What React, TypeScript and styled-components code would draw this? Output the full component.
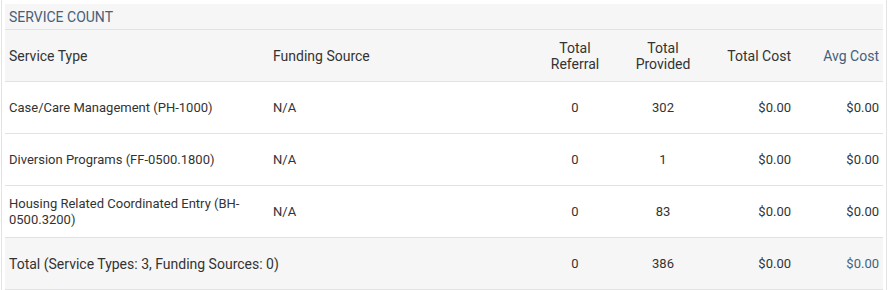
import React from 'react'
import styled, { createGlobalStyle } from 'styled-components'

const GlobalStyle = createGlobalStyle`
  html, body {
    margin: 0;
    padding: 0;
    background: #fff;
  }
  body {
    font-family: Roboto, 'Liberation Sans', Arial, sans-serif;
    color: #333;
  }
`

const Frame = styled.div`
  margin: 0 1px;
  padding: 4px 3px 0 3px;
  border-left: 1px solid #e3e3e3;
  border-right: 1px solid #e3e3e3;
  width: 878px;
`

const Title = styled.div`
  height: 25px;
  display: flex;
  align-items: center;
  padding: 0 4px;
  background: #f6f6f6;
  border-bottom: 1px solid #e2e2e2;
  font-size: 14px;
  color: #45607b;
  text-transform: uppercase;
`

const Row = styled.div<{ $shaded?: boolean }>`
  display: grid;
  grid-template-columns: 264px 262px 88px 88px 88px 88px;
  height: 51px;
  background: ${(p) => (p.$shaded ? '#f6f6f6' : '#fff')};
  border-bottom: 1px solid #e2e2e2;
`

const Cell = styled.div<{
  $align?: 'left' | 'center' | 'right'
  $head?: boolean
  $accent?: boolean
  $span?: number
}>`
  display: flex;
  align-items: center;
  justify-content: ${(p) =>
    p.$align === 'center' ? 'center' : p.$align === 'right' ? 'flex-end' : 'flex-start'};
  grid-column: ${(p) => (p.$span ? `span ${p.$span}` : 'auto')};
  text-align: ${(p) => p.$align || 'left'};
  padding: 0 4px;
  font-size: ${(p) => (p.$head ? '14px' : '13px')};
  line-height: 16px;
  color: ${(p) => (p.$accent ? '#45607b' : '#333')};
`

type Line = {
  type: string
  source: string
  referral: string
  provided: string
  cost: string
  avg: string
}

const lines: Line[] = [
  { type: 'Case/Care Management (PH-1000)', source: 'N/A', referral: '0', provided: '302', cost: '$0.00', avg: '$0.00' },
  { type: 'Diversion Programs (FF-0500.1800)', source: 'N/A', referral: '0', provided: '1', cost: '$0.00', avg: '$0.00' },
  { type: 'Housing Related Coordinated Entry (BH-0500.3200)', source: 'N/A', referral: '0', provided: '83', cost: '$0.00', avg: '$0.00' },
]

const App = () => {
  return (
    <>
      <GlobalStyle />
      <Frame>
        <Title>Service Count</Title>
        <Row $shaded>
          <Cell $head>Service Type</Cell>
          <Cell $head>Funding Source</Cell>
          <Cell $head $align="center">Total<br />Referral</Cell>
          <Cell $head $align="center">Total<br />Provided</Cell>
          <Cell $head $align="right">Total Cost</Cell>
          <Cell $head $align="right" $accent>Avg Cost</Cell>
        </Row>
        {lines.map((l) => (
          <Row key={l.type}>
            <Cell>{l.type}</Cell>
            <Cell>{l.source}</Cell>
            <Cell $align="center">{l.referral}</Cell>
            <Cell $align="center">{l.provided}</Cell>
            <Cell $align="right">{l.cost}</Cell>
            <Cell $align="right">{l.avg}</Cell>
          </Row>
        ))}
        <Row $shaded>
          <Cell $head $span={2}>Total (Service Types: 3, Funding Sources: 0)</Cell>
          <Cell $align="center">0</Cell>
          <Cell $align="center">386</Cell>
          <Cell $align="right">$0.00</Cell>
          <Cell $align="right" $accent>$0.00</Cell>
        </Row>
      </Frame>
    </>
  )
}

export default App
